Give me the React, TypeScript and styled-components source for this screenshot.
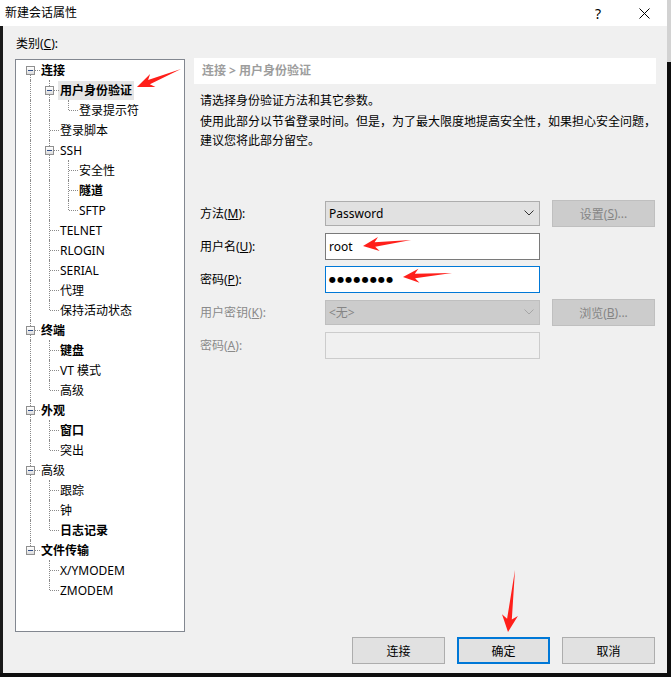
import React from 'react';
import styled, { createGlobalStyle } from 'styled-components';

const GlobalStyle = createGlobalStyle`
  html, body { margin: 0; padding: 0; }
  html {
    min-height: 100%;
    background: linear-gradient(to bottom, #d2d2d2 0, #d2d2d2 62px, #0e0e0e 62px);
  }
  body {
    background: transparent;
    font-family: "Noto Sans", "Noto Sans CJK SC", sans-serif;
    font-size: 12px;
    color: #000;
  }
`;

const Page = styled.div`
  position: relative;
  width: 671px;
  height: 677px;
`;

const Window = styled.div`
  width: 667px;
  height: 673px;
  background: #f0f0f0;
  display: flex;
  flex-direction: column;
`;

const TitleBar = styled.div`
  height: 26px;
  background: #fff;
  display: flex;
  align-items: center;
  padding-left: 5px;
`;

const Title = styled.span`
  flex: 1;
  font-size: 12px;
  line-height: 26px;
`;

const CaptionButton = styled.span`
  width: 46px;
  height: 26px;
  display: flex;
  align-items: center;
  justify-content: center;
  font-size: 14px;
  color: #000;
`;

const Body = styled.div`
  flex: 1;
  display: grid;
  grid-template-columns: 170px 462px;
  grid-template-rows: 1fr auto;
  column-gap: 9px;
  border-left: 3px solid #1a1a1a;
  padding: 10px 0 9px 12px;
  min-height: 0;
`;

const LeftColumn = styled.div`
  display: flex;
  flex-direction: column;
  min-height: 0;
`;

const CategoryLabel = styled.div`
  line-height: 16px;
  margin-bottom: 7px;
  padding-left: 1px;
`;

const TreeBox = styled.div`
  flex: 1;
  background: #fff;
  border: 1px solid #828790;
  padding: 0 0 0 5px;
`;

const TreeRow = styled.div`
  display: flex;
  height: 20px;
  align-items: center;
`;

const Indent = styled.span<{ $through: boolean }>`
  position: relative;
  width: 19px;
  height: 20px;
  flex: none;
  &::before {
    content: '';
    display: ${(p) => (p.$through ? 'block' : 'none')};
    position: absolute;
    left: 9px;
    top: 0;
    bottom: 0;
    border-left: 1px dotted #8a8a8a;
  }
`;

const Connector = styled.span<{ $top: boolean; $bottom: boolean }>`
  position: relative;
  width: 19px;
  height: 20px;
  flex: none;
  &::before {
    content: '';
    position: absolute;
    left: 9px;
    top: ${(p) => (p.$top ? '0' : '10px')};
    bottom: ${(p) => (p.$bottom ? '0' : '10px')};
    border-left: 1px dotted #8a8a8a;
  }
  &::after {
    content: '';
    position: absolute;
    left: 10px;
    right: 0;
    top: 10px;
    border-top: 1px dotted #8a8a8a;
  }
`;

const Expander = styled.span`
  position: absolute;
  z-index: 1;
  left: 5px;
  top: 6px;
  width: 9px;
  height: 9px;
  box-sizing: border-box;
  border: 1px solid #8f8f8f;
  background: linear-gradient(#ffffff, #dcdcdc);
  &::after {
    content: '';
    position: absolute;
    left: 1px;
    top: 3px;
    width: 5px;
    height: 1px;
    background: #2c4a86;
  }
`;

const TreeLabel = styled.span<{ $bold?: boolean; $selected?: boolean }>`
  margin-left: -1px;
  padding: 0 2px;
  line-height: 19px;
  font-weight: ${(p) => (p.$bold ? 700 : 400)};
  background: ${(p) => (p.$selected ? '#e5e5e5' : 'transparent')};
  white-space: nowrap;
`;

const RightColumn = styled.div`
  display: flex;
  flex-direction: column;
  padding-top: 22px;
`;

const Breadcrumb = styled.div`
  height: 26px;
  background: #fff;
  padding-left: 8px;
  line-height: 26px;
  font-weight: 700;
  color: #9d9d9d;
`;

const Paragraph = styled.p<{ $top: number }>`
  margin: ${(p) => p.$top}px 0 0;
  padding: 0 6px;
  line-height: 19.5px;
`;

const Line = styled.span`
  display: block;
  white-space: nowrap;
`;

const Form = styled.div`
  margin-top: 49px;
  padding-left: 6px;
  display: grid;
  grid-template-columns: 113px 215px 103px;
  column-gap: 12px;
  grid-auto-rows: 27px;
  row-gap: 6px;
  align-items: center;
`;

const FieldLabel = styled.span<{ $disabled?: boolean }>`
  grid-column: 1;
  color: ${(p) => (p.$disabled ? '#8a8a8a' : '#000')};
  white-space: nowrap;
`;

const Select = styled.div<{ $disabled?: boolean }>`
  grid-column: 2;
  height: 25px;
  box-sizing: border-box;
  border: 1px solid ${(p) => (p.$disabled ? '#bfbfbf' : '#adadad')};
  background: ${(p) => (p.$disabled ? '#cccccc' : '#e1e1e1')};
  color: ${(p) => (p.$disabled ? '#858585' : '#000')};
  display: flex;
  align-items: center;
  justify-content: space-between;
  padding: 0 5px 0 3px;
`;

const TextField = styled.div<{ $focused?: boolean; $disabled?: boolean }>`
  grid-column: 2;
  height: 27px;
  box-sizing: border-box;
  border: 1px solid
    ${(p) => (p.$focused ? '#0078d7' : p.$disabled ? '#cccccc' : '#7a7a7a')};
  background: ${(p) => (p.$disabled ? '#f0f0f0' : '#fff')};
  display: flex;
  align-items: center;
  padding: 0 3px;
`;

const Dots = styled.span`
  font-family: "DejaVu Sans", sans-serif;
  font-size: 8px;
  letter-spacing: 1.2px;
`;

const SideButton = styled.div`
  grid-column: 3;
  height: 27px;
  margin-top: 1px;
  box-sizing: border-box;
  border: 1px solid #bfbfbf;
  background: #cccccc;
  color: #858585;
  display: flex;
  align-items: center;
  justify-content: center;
`;

const ButtonRow = styled.div`
  grid-column: 2;
  display: flex;
  justify-content: flex-end;
  gap: 12px;
  padding-right: 1px;
  margin-top: 5px;
`;

const DialogButton = styled.div<{ $default?: boolean }>`
  width: 93px;
  height: 27px;
  box-sizing: border-box;
  border: ${(p) => (p.$default ? '2px solid #0078d7' : '1px solid #adadad')};
  background: #e1e1e1;
  display: flex;
  align-items: center;
  justify-content: center;
`;

const Overlay = styled.svg`
  position: absolute;
  left: 0;
  top: 0;
  pointer-events: none;
`;

type Node = { label: string; bold?: boolean; selected?: boolean; children?: Node[] };

const tree: Node[] = [
  {
    label: '连接',
    bold: true,
    children: [
      { label: '用户身份验证', bold: true, selected: true, children: [{ label: '登录提示符' }] },
      { label: '登录脚本' },
      {
        label: 'SSH',
        children: [{ label: '安全性' }, { label: '隧道', bold: true }, { label: 'SFTP' }],
      },
      { label: 'TELNET' },
      { label: 'RLOGIN' },
      { label: 'SERIAL' },
      { label: '代理' },
      { label: '保持活动状态' },
    ],
  },
  {
    label: '终端',
    bold: true,
    children: [{ label: '键盘', bold: true }, { label: 'VT 模式' }, { label: '高级' }],
  },
  { label: '外观', bold: true, children: [{ label: '窗口', bold: true }, { label: '突出' }] },
  { label: '高级', children: [{ label: '跟踪' }, { label: '钟' }, { label: '日志记录', bold: true }] },
  { label: '文件传输', bold: true, children: [{ label: 'X/YMODEM' }, { label: 'ZMODEM' }] },
];

type Row = { node: Node; cont: boolean[]; isLast: boolean; firstRoot: boolean };

function flatten(nodes: Node[], cont: boolean[], out: Row[]) {
  nodes.forEach((n, i) => {
    const isLast = i === nodes.length - 1;
    out.push({ node: n, cont, isLast, firstRoot: cont.length === 0 && i === 0 });
    if (n.children) flatten(n.children, [...cont, !isLast], out);
  });
  return out;
}

const rows = flatten(tree, [], []);

function arrowPoints(
  tx: number,
  ty: number,
  px: number,
  py: number,
  head = 17,
  hw = 7,
  sw = 2.4
) {
  const dx = px - tx;
  const dy = py - ty;
  const len = Math.hypot(dx, dy);
  const ux = dx / len;
  const uy = dy / len;
  const nx = -uy;
  const ny = ux;
  const bx = px - ux * head;
  const by = py - uy * head;
  const cx = px - ux * (head - 4);
  const cy = py - uy * (head - 4);
  const pts = [
    [tx, ty],
    [cx + nx * sw, cy + ny * sw],
    [bx + nx * hw, by + ny * hw],
    [px, py],
    [bx - nx * hw, by - ny * hw],
    [cx - nx * sw, cy - ny * sw],
  ];
  return pts.map((p) => `${p[0].toFixed(1)},${p[1].toFixed(1)}`).join(' ');
}

const Chevron = ({ color }: { color: string }) => (
  <svg width="10" height="6" viewBox="0 0 10 6">
    <polyline points="0.5,0.5 5,5 9.5,0.5" fill="none" stroke={color} strokeWidth="1" />
  </svg>
);

export default function App() {
  return (
    <Page>
      <GlobalStyle />
      <Window>
        <TitleBar>
          <Title>新建会话属性</Title>
          <CaptionButton>?</CaptionButton>
          <CaptionButton>
            <svg width="11" height="11" viewBox="0 0 11 11">
              <path d="M0.5 0.5 L10.5 10.5 M10.5 0.5 L0.5 10.5" stroke="#000" strokeWidth="1" />
            </svg>
          </CaptionButton>
        </TitleBar>
        <Body>
          <LeftColumn>
            <CategoryLabel>
              类别(<u>C</u>):
            </CategoryLabel>
            <TreeBox>
              {rows.map((r, i) => (
                <TreeRow key={i}>
                  {r.cont.map((c, k) => (
                    <Indent key={k} $through={c} />
                  ))}
                  <Connector $top={!r.firstRoot} $bottom={!r.isLast}>
                    {r.node.children && <Expander />}
                  </Connector>
                  <TreeLabel $bold={r.node.bold} $selected={r.node.selected}>
                    {r.node.label}
                  </TreeLabel>
                </TreeRow>
              ))}
            </TreeBox>
          </LeftColumn>
          <RightColumn>
            <Breadcrumb>连接 &gt; 用户身份验证</Breadcrumb>
            <Paragraph $top={7}>请选择身份验证方法和其它参数。</Paragraph>
            <Paragraph $top={1}>
              <Line>使用此部分以节省登录时间。但是，为了最大限度地提高安全性，如果担心安全问题，</Line>
              <Line>建议您将此部分留空。</Line>
            </Paragraph>
            <Form>
              <FieldLabel>
                方法(<u>M</u>):
              </FieldLabel>
              <Select>
                <span>Password</span>
                <Chevron color="#333" />
              </Select>
              <SideButton>
                设置(<u>S</u>)...
              </SideButton>

              <FieldLabel>
                用户名(<u>U</u>):
              </FieldLabel>
              <TextField>root</TextField>
              <span />

              <FieldLabel>
                密码(<u>P</u>):
              </FieldLabel>
              <TextField $focused>
                <Dots>●●●●●●●●</Dots>
              </TextField>
              <span />

              <FieldLabel $disabled>
                用户密钥(<u>K</u>):
              </FieldLabel>
              <Select $disabled>
                <span>&lt;无&gt;</span>
                <Chevron color="#a6a6a6" />
              </Select>
              <SideButton>
                浏览(<u>B</u>)...
              </SideButton>

              <FieldLabel $disabled>
                密码(<u>A</u>):
              </FieldLabel>
              <TextField $disabled />
            </Form>
          </RightColumn>
          <ButtonRow>
            <DialogButton>连接</DialogButton>
            <DialogButton $default>确定</DialogButton>
            <DialogButton>取消</DialogButton>
          </ButtonRow>
        </Body>
      </Window>
      <Overlay width="671" height="677" viewBox="0 0 671 677">
        <g fill="#ff1f1a">
          <polygon points={arrowPoints(181, 69, 137, 87)} />
          <polygon points={arrowPoints(411, 240, 363, 246, 16, 7, 2.2)} />
          <polygon points={arrowPoints(452, 273, 403, 277, 16, 7, 2.2)} />
          <polygon points={arrowPoints(515, 570, 508, 632, 17, 8, 2.4)} />
        </g>
      </Overlay>
    </Page>
  );
}
